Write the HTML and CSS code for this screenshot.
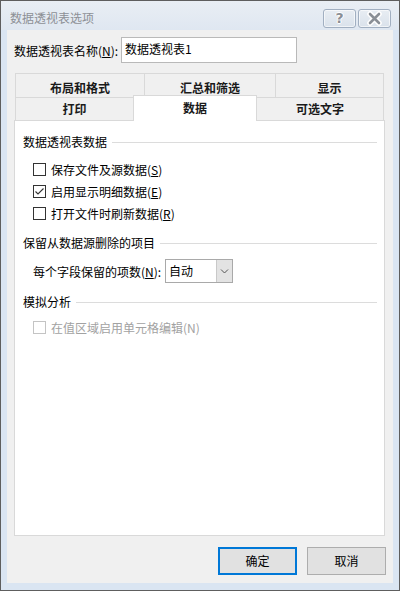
FILE: index.html
```html
<!DOCTYPE html>
<html lang="zh-CN">
<head>
<meta charset="utf-8">
<title>数据透视表选项</title>
<link rel="stylesheet" href="styles.css">
</head>
<body>
<div class="window">
  <div class="titlebar">
    <span class="title">数据透视表选项</span>
    <div class="caption-buttons">
      <div class="cap-btn help"><span class="help-glyph">?</span></div>
      <div class="cap-btn close">
        <svg width="33" height="19" viewBox="0 0 33 19">
          <path d="M12 5 L21 14 M21 5 L12 14" stroke="#ffffff" stroke-width="5.5" stroke-linecap="round" fill="none"/>
          <path d="M12 5 L21 14 M21 5 L12 14" stroke="#8a8f96" stroke-width="2.6" stroke-linecap="round" fill="none"/>
        </svg>
      </div>
    </div>
  </div>
  <div class="client">
    <div class="name-row">
      <span class="name-label">数据透视表名称(<u>N</u>):</span>
      <div class="name-input">数据透视表1</div>
    </div>
    <div class="tabs">
      <div class="tab-row back">
        <div class="tab t-layout">布局和格式</div>
        <div class="tab t-total">汇总和筛选</div>
        <div class="tab t-display last">显示</div>
      </div>
      <div class="tab-row front">
        <div class="tab t-print">打印</div>
        <div class="tab t-data selected">数据</div>
        <div class="tab t-alt last">可选文字</div>
      </div>
    </div>
    <div class="panel">
      <div class="group-head"><span>数据透视表数据</span><i class="rule"></i></div>
      <div class="check-row first">
        <span class="box"></span><span class="lbl">保存文件及源数据(<u>S</u>)</span>
      </div>
      <div class="check-row">
        <span class="box"><svg width="11" height="11" viewBox="0 0 11 11"><path d="M1.5 5.5 L4 8 L9.5 2.5" stroke="#333" stroke-width="1.1" fill="none"/></svg></span><span class="lbl">启用显示明细数据(<u>E</u>)</span>
      </div>
      <div class="check-row">
        <span class="box"></span><span class="lbl">打开文件时刷新数据(<u>R</u>)</span>
      </div>
      <div class="group-head g2"><span>保留从数据源删除的项目</span><i class="rule"></i></div>
      <div class="select-row">
        <span class="lbl">每个字段保留的项数(<u>N</u>):</span>
        <div class="combo">
          <span class="combo-text">自动</span>
          <span class="combo-btn"><svg width="9" height="5" viewBox="0 0 9 5"><path d="M1 0.5 L4.5 4 L8 0.5" stroke="#555" stroke-width="1" fill="none"/></svg></span>
        </div>
      </div>
      <div class="group-head g3"><span>模拟分析</span><i class="rule"></i></div>
      <div class="check-row disabled">
        <span class="box"></span><span class="lbl">在值区域启用单元格编辑(N)</span>
      </div>
    </div>
    <div class="buttons">
      <div class="btn default">确定</div>
      <div class="btn">取消</div>
    </div>
  </div>
</div>
</body>
</html>
```
FILE: styles.css
```css
* { box-sizing: border-box; }
html, body { margin: 0; padding: 0; }
body {
  width: 400px;
  height: 591px;
  font-family: "Noto Sans CJK SC", "Noto Sans", sans-serif;
  font-size: 12px;
  color: #000;
  background: #dae5f2;
}
u { text-decoration: underline; text-underline-offset: 1px; }

.window {
  width: 400px;
  height: 591px;
  border: 1px solid #5e5e5e;
  background: #dae5f2;
  padding: 0 6px 7px 6px;
  display: flex;
  flex-direction: column;
}

.titlebar {
  height: 29px;
  margin: 0 -6px;
  padding: 5px 8px 0 9px;
  display: flex;
  align-items: center;
  justify-content: space-between;
  background: linear-gradient(#e9eef4, #dfe7f1);
}
.title {
  color: #8d9096;
  font-size: 12px;
  line-height: 16px;
}
.caption-buttons { display: flex; gap: 2px; }
.cap-btn {
  width: 33px;
  height: 19px;
  border: 1px solid #a1afc1;
  border-radius: 3px;
  background: linear-gradient(#e8edf3, #dae2eb);
  box-shadow: inset 0 0 0 1px rgba(255,255,255,0.6);
  display: flex;
  align-items: center;
  justify-content: center;
  overflow: hidden;
}
.cap-btn svg { display: block; margin: -1px; }
.help-glyph {
  font-family: "DejaVu Sans", sans-serif;
  font-weight: bold;
  font-size: 14px;
  line-height: 17px;
  color: #8a8f96;
  text-shadow: 1px 0 #fff, -1px 0 #fff, 0 1px #fff, 0 -1px #fff;
}

.client {
  height: 553px;
  background: #f0f0f0;
  padding: 7px 8px 0 7px;
  display: flex;
  flex-direction: column;
}

.name-row {
  height: 26px;
  display: flex;
  align-items: center;
}
.name-label { width: 107px; }
.name-input {
  width: 176px;
  height: 26px;
  border: 1px solid #b9b9b9;
  background: #fff;
  padding-left: 3px;
  line-height: 22px;
}

.tabs {
  margin: 10px 1px 0 1px;
  display: flex;
  flex-direction: column;
}
.tab-row { display: flex; align-items: flex-start; }
.tab {
  border-top: 1px solid #d9d9d9;
  border-left: 1px solid #d9d9d9;
  background: #f0f0f0;
  text-align: center;
  font-weight: bold;
  color: #1a1a1a;
}
.tab.last { border-right: 1px solid #d9d9d9; }
.back .tab { height: 24px; line-height: 23px; padding-top: 2px; }
.front .tab { height: 23px; line-height: 21px; }
.t-layout { width: 129px; }
.t-total { width: 131px; }
.t-display { width: 109px; }
.t-print { width: 118px; }
.t-data { width: 124px; }
.t-alt { width: 127px; border-left: none; }
.tab.selected {
  height: 26px;
  margin-top: -2px;
  margin-bottom: -1px;
  border-right: 1px solid #d9d9d9;
  background: #fff;
  line-height: 24px;
  position: relative;
  z-index: 1;
}

.panel {
  height: 416px;
  border: 1px solid #d9d9d9;
  background: #fff;
  padding: 11px 7px 0 8px;
}
.group-head {
  height: 20px;
  display: flex;
  align-items: center;
  line-height: 20px;
}
.group-head .rule {
  flex: 1;
  height: 1px;
  background: #dcdcdc;
  margin-left: 5px;
}
.group-head.g2 { margin-top: 9px; }
.group-head.g3 { margin-top: 9px; }

.check-row {
  height: 22px;
  display: flex;
  align-items: center;
  margin-left: 10px;
}
.check-row.first { margin-top: 6px; }
.box {
  width: 13px;
  height: 13px;
  border: 1px solid #333;
  background: #fff;
  margin-right: 5px;
  display: flex;
  align-items: center;
  justify-content: center;
}
.box svg { display: block; }
.check-row.disabled { margin-top: 4px; color: #a2a2a2; }
.check-row.disabled .box { border-color: #c4c4c4; }

.select-row {
  height: 24px;
  margin-top: 6px;
  margin-left: 10px;
  display: flex;
  align-items: center;
}
.select-row .lbl { width: 132px; }
.combo {
  width: 68px;
  height: 24px;
  border: 1px solid #a9a9a9;
  background: #fff;
  display: flex;
}
.combo-text { flex: 1; padding-left: 3px; line-height: 21px; }
.combo-btn {
  width: 16px;
  background: #e3e3e3;
  border-left: 1px solid #c9c9c9;
  display: flex;
  align-items: center;
  justify-content: center;
}
.combo-btn svg { display: block; }

.buttons {
  margin-top: 11px;
  margin-right: -1px;
  display: flex;
  justify-content: flex-end;
  gap: 10px;
}
.btn {
  width: 79px;
  height: 28px;
  border: 1px solid #adadad;
  background: #e1e1e1;
  text-align: center;
  line-height: 26px;
}
.btn.default {
  border: 2px solid #0078d7;
  line-height: 24px;
}
```
